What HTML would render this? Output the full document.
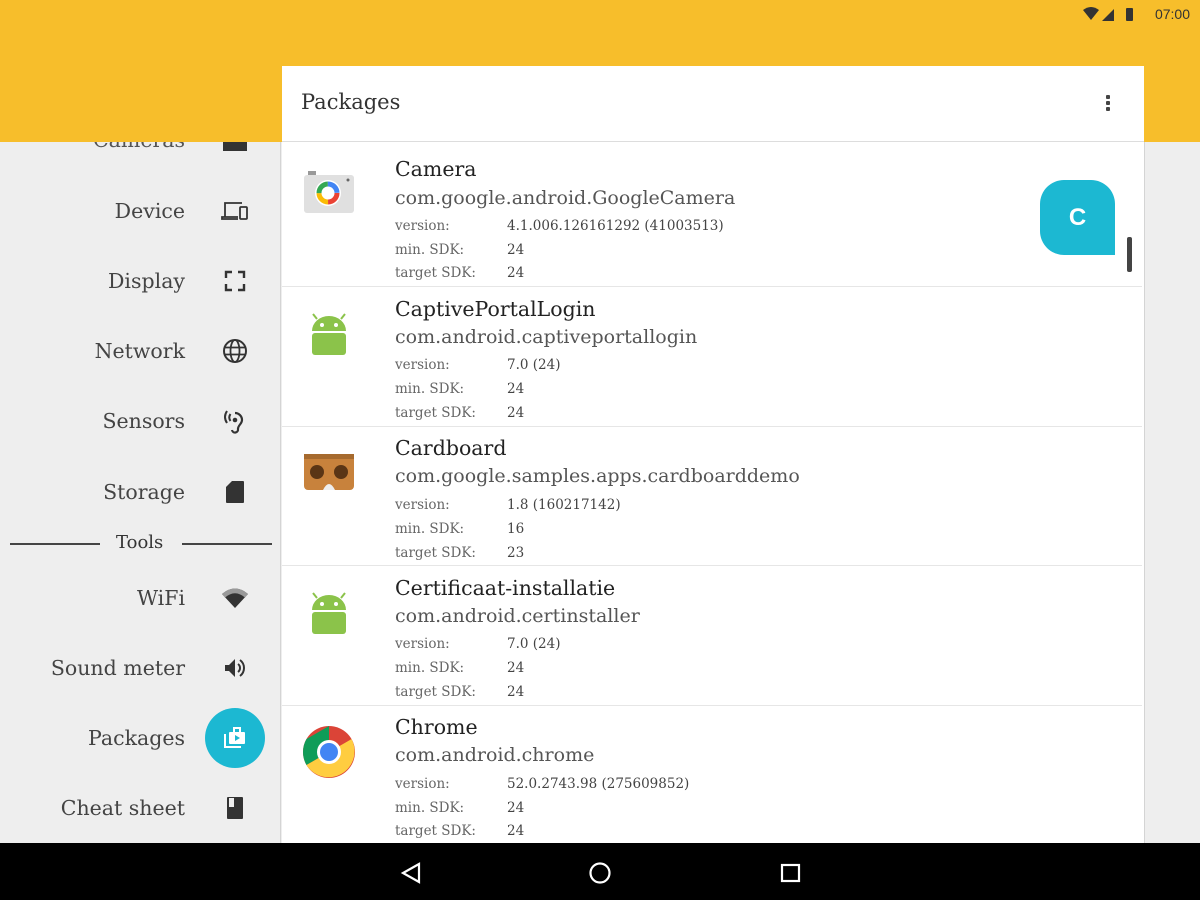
<!DOCTYPE html>
<html><head><meta charset="utf-8"><style>
*{margin:0;padding:0;box-sizing:border-box}
body{width:1200px;height:900px;position:relative;overflow:hidden;background:#eeeeee;font-family:"DejaVu Serif","Liberation Serif",serif;color:#333}
.abs{position:absolute}
#top{left:0;top:0;width:1200px;height:142px;background:#f7be2b}
#left{left:0;top:142px;width:281px;height:701px;background:#eeeeee;border-right:1px solid #d4d4d4}
.mi{position:absolute;right:1015px;font-size:20.5px;color:#444;line-height:24px;white-space:nowrap;text-align:right}
.ic{position:absolute;left:221px;width:28px;height:28px}
#card{left:282px;top:66px;width:862px;height:777px;background:#fff}
#hdr{left:282px;top:66px;width:862px;height:76px;background:#fff;border-bottom:1px solid #ddd}
.row{position:absolute;left:282px;width:860px;height:140px;border-bottom:1px solid #e6e6e6}
.t{position:absolute;left:113px;font-size:20.5px;color:#222;line-height:24px}
.p{position:absolute;left:113px;font-size:19px;color:#555;line-height:22px}
.k{position:absolute;left:113px;font-size:13.5px;color:#666;line-height:18px}
.v{position:absolute;left:225px;font-size:13.5px;color:#444;line-height:18px}
.ico{position:absolute;left:20px;top:20px;width:54px;height:54px}
#nav{left:0;top:843px;width:1200px;height:57px;background:#000}
</style></head><body>
<div id="top" class="abs"></div>
<div class="abs" style="right:10px;top:6px;font-family:'Liberation Sans',sans-serif;font-size:14px;color:#333">07:00</div>
<svg class="abs" style="left:1082px;top:6px" width="66" height="18" viewBox="0 0 66 18"><path d="M1 4 Q9 -2 17 4 L9 14Z" fill="#333"/><path d="M20 15 L32 3 L32 15Z" fill="#333"/><rect x="44" y="2" width="7" height="13" rx="1" fill="#333"/></svg>
<div id="left" class="abs">
</div>
<div class="mi" style="top:128px;color:#555">Cameras</div>
<div class="abs" style="left:0;top:0;width:281px;height:142px;background:#f7be2b"></div>
<div class="abs" style="left:223px;top:142px;width:24px;height:9px;background:#333"></div>
<div class="mi" style="top:199px">Device</div>
<svg class="ic" style="top:197px" viewBox="0 0 28 28"><path d="M21 6H4v14H1v2h16M4 20h13" fill="none" stroke="#333" stroke-width="1.8"/><rect x="19" y="10" width="7" height="12" rx="1" fill="none" stroke="#333" stroke-width="1.8"/></svg>
<div class="mi" style="top:269px">Display</div>
<svg class="ic" style="top:267px" viewBox="0 0 28 28"><path d="M5 11V5h6M17 5h6v6M23 17v6h-6M11 23H5v-6" fill="none" stroke="#333" stroke-width="2.4"/></svg>
<div class="mi" style="top:339px">Network</div>
<svg class="ic" style="top:337px" viewBox="0 0 28 28"><circle cx="14" cy="14" r="11" fill="none" stroke="#333" stroke-width="2"/><ellipse cx="14" cy="14" rx="4.5" ry="11" fill="none" stroke="#333" stroke-width="1.8"/><path d="M3 10.5h22M3 17.5h22" stroke="#333" stroke-width="1.8"/></svg>
<div class="mi" style="top:409px">Sensors</div>
<svg class="ic" style="top:407px" viewBox="0 0 28 28"><path d="M14 6a7 7 0 0 1 7 7c0 4-4 5-4 9a3 3 0 0 1-6 1" fill="none" stroke="#333" stroke-width="2.2"/><path d="M6 4q-4 6 0 12M9.5 7q-2.5 3.5 0 7" fill="none" stroke="#333" stroke-width="2"/><circle cx="14" cy="13" r="2.3" fill="#333"/></svg>
<div class="mi" style="top:480px">Storage</div>
<svg class="ic" style="top:478px" viewBox="0 0 28 28"><path d="M11 3h11a1 1 0 0 1 1 1v20a1 1 0 0 1-1 1H6a1 1 0 0 1-1-1V9z" fill="#333"/></svg>
<div class="abs" style="left:10px;top:543px;width:90px;height:2px;background:#444"></div>
<div class="abs" style="left:182px;top:543px;width:90px;height:2px;background:#444"></div>
<div class="abs" style="left:116px;top:532px;font-size:18px;color:#333">Tools</div>
<div class="mi" style="top:586px">WiFi</div>
<svg class="ic" style="top:584px" viewBox="0 0 28 28"><path d="M1 10 Q14 -1 27 10 L14 24Z" fill="#333"/><path d="M1 10 Q14 -1 27 10 L24 13.5 Q14 5 4 13.5Z" fill="#999"/></svg>
<div class="mi" style="top:656px">Sound meter</div>
<svg class="ic" style="top:654px" viewBox="0 0 28 28"><path d="M4 11h4l6-6v18l-6-6H4z" fill="#333"/><path d="M17 10a5 5 0 0 1 0 8M19 6a10 10 0 0 1 0 16" fill="none" stroke="#333" stroke-width="2"/></svg>
<div class="mi" style="top:726px">Packages</div>
<div class="abs" style="left:205px;top:708px;width:60px;height:60px;border-radius:50%;background:#1cb8d2"></div>
<svg class="abs" style="left:223px;top:726px" width="24" height="24" viewBox="0 0 24 24"><path d="M2 8v13h16" fill="none" stroke="#fff" stroke-width="2"/><rect x="6" y="6" width="16" height="12" rx="1" fill="#fff"/><rect x="11" y="2" width="6" height="5" fill="none" stroke="#fff" stroke-width="2"/><path d="M12 9l5 3-5 3z" fill="#1cb8d2"/></svg>
<div class="mi" style="top:796px">Cheat sheet</div>
<svg class="ic" style="top:794px" viewBox="0 0 28 28"><rect x="6" y="3" width="16" height="22" rx="1" fill="#333"/><rect x="8" y="4" width="5" height="9" fill="#eee"/></svg>

<div id="card" class="abs"></div>
<div class="abs" style="left:1144px;top:142px;width:1px;height:701px;background:#d4d4d4"></div>
<div id="hdr" class="abs"></div>
<div class="abs" style="left:301px;top:90px;font-size:21px;color:#333">Packages</div>
<div class="abs" style="left:1106px;top:95px;width:4px;height:4px;background:#444;border-radius:1px;box-shadow:0 6px 0 #444,0 12px 0 #444"></div>

<div class="row" style="top:147px">
<svg class="ico" viewBox="0 0 54 54"><rect x="2" y="8" width="50" height="38" rx="3" fill="#e0e0e0"/><rect x="6" y="4" width="8" height="4" fill="#999"/><circle cx="46" cy="13" r="1.5" fill="#666"/><circle cx="26" cy="26" r="13" fill="#fff"/><circle cx="26" cy="26" r="9" fill="none" stroke="#ea4335" stroke-width="5" stroke-dasharray="14 43"/><circle cx="26" cy="26" r="9" fill="none" stroke="#fbbc05" stroke-width="5" stroke-dasharray="14 43" stroke-dashoffset="-14"/><circle cx="26" cy="26" r="9" fill="none" stroke="#34a853" stroke-width="5" stroke-dasharray="14 43" stroke-dashoffset="-28"/><circle cx="26" cy="26" r="9" fill="none" stroke="#4285f4" stroke-width="5" stroke-dasharray="14 43" stroke-dashoffset="-42"/></svg>
<div class="t" style="top:10px">Camera</div><div class="p" style="top:40px">com.google.android.GoogleCamera</div>
<div class="k" style="top:70px">version:</div><div class="v" style="top:70px">4.1.006.126161292 (41003513)</div>
<div class="k" style="top:94px">min. SDK:</div><div class="v" style="top:94px">24</div>
<div class="k" style="top:117px">target SDK:</div><div class="v" style="top:117px">24</div>
</div>
<div class="row" style="top:287px">
<svg class="ico" viewBox="0 0 54 54"><path d="M10 24a17 15 0 0 1 34 0z" fill="#8bc34a"/><path d="M15 12l-4-5M39 12l4-5" stroke="#8bc34a" stroke-width="2"/><circle cx="20" cy="18" r="2" fill="#fff"/><circle cx="34" cy="18" r="2" fill="#fff"/><rect x="10" y="26" width="34" height="22" rx="3" fill="#8bc34a"/></svg>
<div class="t" style="top:10px">CaptivePortalLogin</div><div class="p" style="top:39px">com.android.captiveportallogin</div>
<div class="k" style="top:69px">version:</div><div class="v" style="top:69px">7.0 (24)</div>
<div class="k" style="top:93px">min. SDK:</div><div class="v" style="top:93px">24</div>
<div class="k" style="top:117px">target SDK:</div><div class="v" style="top:117px">24</div>
</div>
<div class="row" style="top:426px">
<svg class="ico" viewBox="0 0 54 54"><rect x="2" y="8" width="50" height="36" rx="4" fill="#c8823c"/><circle cx="15" cy="26" r="7" fill="#5a3515"/><circle cx="39" cy="26" r="7" fill="#5a3515"/><path d="M21 44 Q27 32 33 44Z" fill="#eee"/><rect x="2" y="8" width="50" height="5" fill="#a66a2e"/></svg>
<div class="t" style="top:10px">Cardboard</div><div class="p" style="top:39px">com.google.samples.apps.cardboarddemo</div>
<div class="k" style="top:70px">version:</div><div class="v" style="top:70px">1.8 (160217142)</div>
<div class="k" style="top:94px">min. SDK:</div><div class="v" style="top:94px">16</div>
<div class="k" style="top:118px">target SDK:</div><div class="v" style="top:118px">23</div>
</div>
<div class="row" style="top:566px">
<svg class="ico" viewBox="0 0 54 54"><path d="M10 24a17 15 0 0 1 34 0z" fill="#8bc34a"/><path d="M15 12l-4-5M39 12l4-5" stroke="#8bc34a" stroke-width="2"/><circle cx="20" cy="18" r="2" fill="#fff"/><circle cx="34" cy="18" r="2" fill="#fff"/><rect x="10" y="26" width="34" height="22" rx="3" fill="#8bc34a"/></svg>
<div class="t" style="top:10px">Certificaat-installatie</div><div class="p" style="top:39px">com.android.certinstaller</div>
<div class="k" style="top:69px">version:</div><div class="v" style="top:69px">7.0 (24)</div>
<div class="k" style="top:93px">min. SDK:</div><div class="v" style="top:93px">24</div>
<div class="k" style="top:117px">target SDK:</div><div class="v" style="top:117px">24</div>
</div>
<div class="row" style="top:705px;border:none">
<svg class="ico" viewBox="0 0 54 54"><circle cx="27" cy="27" r="26" fill="#db4437"/><path d="M27 27 L4.5 40 A26 26 0 0 1 4.5 14 L27 1 Z" fill="#0f9d58"/><path d="M27 27 L49.5 14 A26 26 0 0 1 4.5 40 Z" fill="#ffcd40"/><path d="M27 27 L49.5 14 A26 26 0 0 1 27 1 Z" fill="#db4437"/><circle cx="27" cy="27" r="12" fill="#fff"/><circle cx="27" cy="27" r="9" fill="#4285f4"/></svg>
<div class="t" style="top:10px">Chrome</div><div class="p" style="top:39px">com.android.chrome</div>
<div class="k" style="top:70px">version:</div><div class="v" style="top:70px">52.0.2743.98 (275609852)</div>
<div class="k" style="top:94px">min. SDK:</div><div class="v" style="top:94px">24</div>
<div class="k" style="top:117px">target SDK:</div><div class="v" style="top:117px">24</div>
</div>

<div class="abs" style="left:1040px;top:180px;width:75px;height:75px;background:#1cb8d2;border-radius:24px 24px 0 24px;color:#fff;font-family:'Liberation Sans',sans-serif;font-weight:bold;font-size:24px;text-align:center;line-height:75px">C</div>
<div class="abs" style="left:1127px;top:237px;width:5px;height:35px;background:#444;border-radius:2px"></div>

<div id="nav" class="abs"></div>
<svg class="abs" style="left:398px;top:861px" width="405" height="24" viewBox="0 0 405 24"><path d="M21 3 L5 12 L21 21Z" fill="none" stroke="#fff" stroke-width="2.2"/><circle cx="202" cy="12" r="9.5" fill="none" stroke="#fff" stroke-width="2.2"/><rect x="384" y="4" width="17" height="16" fill="none" stroke="#fff" stroke-width="2.2"/></svg>
</body></html>
